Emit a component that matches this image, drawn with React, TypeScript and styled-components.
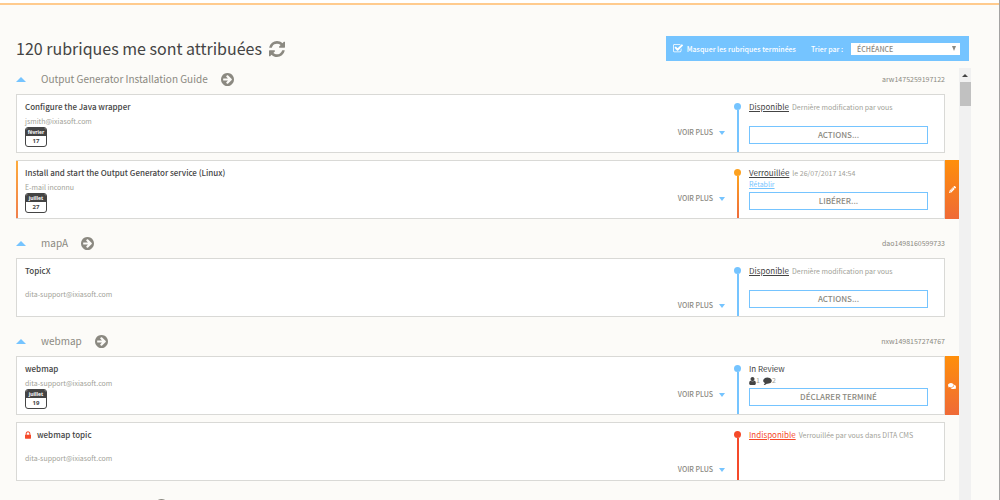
import React from "react";
import styled, { createGlobalStyle, css } from "styled-components";
import { FaComments, FaPencilAlt } from "react-icons/fa";

const colors = {
  page: "#fcfbf8",
  sky: "#75c4ff",
  text: "#444444",
  muted: "#8b8981",
  faint: "#a19f98",
  border: "#d9d9d6",
  red: "#f54a2a",
  amber: "#fda11f",
};

const Global = createGlobalStyle`
  * { box-sizing: border-box; }
  body {
    margin: 0;
    background: ${colors.page};
    color: ${colors.text};
    font-family: "Noto Sans CJK SC", "Noto Sans", sans-serif;
  }
  button, select, input { font-family: inherit; margin: 0; }
`;

/* ---------- icons ---------- */

const paths = {
  refresh:
    "M1639 1056q0 5-1 7-64 268-268 434.5t-478 166.5q-146 0-282.5-55t-243.5-157l-129 129q-19 19-45 19t-45-19-19-45v-448q0-26 19-45t45-19h448q26 0 45 19t19 45-19 45l-137 137q71 66 161 102t187 36q134 0 250-65t186-179q11-17 53-117 8-23 30-23h192q13 0 22.5 9.5t9.5 22.5zm25-800v448q0 26-19 45t-45 19h-448q-26 0-45-19t-19-45 19-45l138-138q-148-137-349-137-134 0-250 65t-186 179q-11 17-53 117-8 23-30 23h-199q-13 0-22.5-9.5t-9.5-22.5v-7q65-268 270-434.5t480-166.5q146 0 284 55.5t245 156.5l130-129q19-19 45-19t45 19 19 45z",
  arrow:
    "M1413 896q0-27-18-45l-91-91-362-362q-18-18-45-18t-45 18l-91 91q-18 18-18 45t18 45l189 189h-502q-26 0-45 19t-19 45v128q0 26 19 45t45 19h502l-189 189q-18 18-18 45t18 45l91 91q18 18 45 18t45-18l362-362 91-91q18-18 18-45zm251 0q0 209-103 385.5t-279.5 279.5-385.5 103-385.5-103-279.5-279.5-103-385.5 103-385.5 279.5-279.5 385.5-103 385.5 103 279.5 279.5 103 385.5z",
  check:
    "M1472 930v318q0 119-84.5 203.5t-203.5 84.5h-832q-119 0-203.5-84.5t-84.5-203.5v-832q0-119 84.5-203.5t203.5-84.5h832q63 0 117 25 15 7 18 23 3 17-9 29l-49 49q-10 10-23 10-3 0-9-2-23-6-45-6h-832q-66 0-113 47t-47 113v832q0 66 47 113t113 47h832q66 0 113-47t47-113v-254q0-13 9-22l64-64q10-10 23-10 6 0 12 3 20 8 20 29zm231-489l-814 814q-24 24-57 24t-57-24l-430-430q-24-24-24-57t24-57l110-110q24-24 57-24t57 24l263 263 647-647q24-24 57-24t57 24l110 110q24 24 24 57t-24 57z",
  lock: "M640 768h512v-192q0-106-75-181t-181-75-181 75-75 181v192zm832 96v576q0 40-28 68t-68 28h-960q-40 0-68-28t-28-68v-576q0-40 28-68t68-28h32v-192q0-184 132-316t316-132 316 132 132 316v192h32q40 0 68 28t28 68z",
  user: "M1536 1399q0 109-62.5 187t-150.5 78h-854q-88 0-150.5-78t-62.5-187q0-85 8.5-160.5t31.5-152 58.5-131 94-89 134.5-34.5q131 128 313 128t313-128q76 0 134.5 34.5t94 89 58.5 131 31.5 152 8.5 160.5zm-256-887q0 159-112.5 271.5t-271.5 112.5-271.5-112.5-112.5-271.5 112.5-271.5 271.5-112.5 271.5 112.5 112.5 271.5z",
  comment:
    "M1792 896q0 174-120 321.5t-326 233-450 85.5q-70 0-145-8-198 175-460 242-49 14-114 22-17 2-30.5-9t-17.5-29v-1q-3-4-.5-12t2-10 4.5-9.5l6-9 7-8.5 8-9q7-8 31-34.5t34.5-38 31-39.5 32.5-51 27-59 26-76q-157-89-247.5-220t-90.5-281q0-130 71-248.5t191-204.5 286-136.5 348-50.5q244 0 450 85.5t326 233 120 321.5z",
};

const boxes: Record<keyof typeof paths, string> = {
  refresh: "128 128 1536 1536",
  arrow: "128 128 1536 1536",
  check: "64 192 1664 1408",
  lock: "320 128 1152 1408",
  user: "256 128 1280 1536",
  comment: "0 128 1792 1664",
};

const Svg = styled.svg`
  display: block;
  flex: none;
  fill: currentColor;
`;

type IconProps = { name: keyof typeof paths; width: number; height: number };

const Icon = ({ name, width, height }: IconProps) => (
  <Svg width={width} height={height} viewBox={boxes[name]} aria-hidden="true">
    <path d={paths[name]} />
  </Svg>
);

const Triangle = styled.span<{ $up?: boolean }>`
  flex: none;
  border: solid transparent;
  ${(p) =>
    p.$up
      ? css`
          border-width: 0 5px 5px;
          border-bottom-color: ${colors.sky};
        `
      : css`
          border-width: 4px 3px 0;
          border-top-color: ${colors.sky};
        `}
`;

/* ---------- page frame ---------- */

const Page = styled.div`
  height: 100vh;
  overflow: hidden;
  display: flex;
  flex-direction: column;
  border-right: 1px solid #a3a3a3;
`;

const TopStrip = styled.div`
  flex: none;
  height: 5px;
  background: #ffffff;
  border-bottom: 2px solid #ffcb8e;
`;

const Header = styled.header`
  flex: none;
  display: flex;
  justify-content: space-between;
  align-items: center;
  padding: 31px 30px 7px 16px;
`;

const Heading = styled.h1`
  margin: 0;
  font-size: 16px;
  line-height: 25px;
  font-weight: 400;
`;

const HeadingGroup = styled.div`
  display: flex;
  align-items: center;
  gap: 7px;
`;

const IconButton = styled.button`
  display: block;
  padding: 0;
  border: 0;
  background: none;
  color: ${colors.muted};
`;

const Toolbar = styled.div`
  display: flex;
  align-items: center;
  height: 25px;
  padding: 0 9px 0 7px;
  gap: 15px;
  background: ${colors.sky};
  color: #ffffff;
  font-size: 7px;
  font-weight: 500;
`;

const ToolLabel = styled.label`
  display: flex;
  align-items: center;
  gap: 4px;
  white-space: nowrap;
`;

const CheckHolder = styled.span`
  display: grid;
  > * {
    grid-area: 1 / 1;
  }
`;

const Checkbox = styled.input`
  appearance: none;
  width: 10px;
  height: 9px;
`;

const SortLabel = styled(ToolLabel)`
  gap: 8px;
`;

const SelectHolder = styled.span`
  display: grid;
  align-items: center;
  width: 109px;
  height: 12px;
  background: #ffffff;
  color: ${colors.muted};
  > * {
    grid-area: 1 / 1;
  }
`;

const Select = styled.select`
  appearance: none;
  width: 100%;
  height: 12px;
  padding: 0 6px;
  border: 0;
  background: none;
  color: inherit;
  font-size: 7px;
  line-height: 12px;
  font-weight: 500;
`;

const SelectArrow = styled.span`
  justify-self: end;
  margin-right: 4px;
  border: solid transparent;
  border-width: 5px 2px 0;
  border-top-color: ${colors.muted};
  pointer-events: none;
`;

/* ---------- list ---------- */

const Body = styled.main`
  flex: 1;
  min-height: 0;
  display: flex;
  padding: 0 28px 0 16px;
`;

const List = styled.div`
  flex: 1;
  min-width: 0;
  overflow: hidden;
`;

const Group = styled.section`
  margin-bottom: 13px;
`;

const GroupHeader = styled.div`
  display: flex;
  align-items: center;
  height: 22px;
  margin: 0 14px 4px 0;
`;

const GroupName = styled.h2`
  margin: 0 13px 0 15px;
  font-size: 10px;
  line-height: 22px;
  font-weight: 400;
  color: ${colors.muted};
`;

const UnnamedGroup = styled.span`
  width: 129px;
`;

const GroupCode = styled.span`
  margin-left: auto;
  font-size: 7px;
  color: ${colors.muted};
`;

const Cards = styled.div`
  display: grid;
  gap: 7px;
`;

const CardRow = styled.div`
  display: flex;
`;

const Card = styled.article<{ $accent?: boolean }>`
  flex: 1;
  min-width: 0;
  display: flex;
  height: 59px;
  border: 1px solid ${colors.border};
  background: #ffffff;
  ${(p) =>
    p.$accent &&
    css`
      border-left: 0;
      padding-left: 1px;
      background: linear-gradient(#fdab3c, #f07f4c) left / 2px 100% no-repeat #ffffff;
    `}
`;

const SideTab = styled.button`
  flex: none;
  width: 14px;
  padding: 0;
  border: 0;
  display: grid;
  place-items: center;
  color: #ffffff;
  background: linear-gradient(#ff8f0a, #ef6a37);
`;

const TabSpace = styled.span`
  flex: none;
  width: 14px;
`;

const Summary = styled.div`
  flex: 1;
  min-width: 0;
  padding: 6px 0 0 8px;
`;

const Title = styled.h3`
  display: flex;
  align-items: center;
  gap: 6px;
  margin: 0;
  font-size: 8px;
  line-height: 12px;
  font-weight: 500;
  svg {
    color: ${colors.red};
  }
`;

const Email = styled.p<{ $low?: boolean }>`
  margin: ${(p) => (p.$low ? "12px" : "3px")} 0 0;
  font-size: 7px;
  line-height: 11px;
  color: ${colors.faint};
`;

const DateBox = styled.time`
  display: block;
  width: 22px;
  height: 20px;
  border: 1px solid ${colors.text};
  border-radius: 3px;
  overflow: hidden;
  text-align: center;
  font-family: "Noto Sans", sans-serif;
  font-size: 6px;
  font-weight: 700;
`;

const Month = styled.span`
  display: block;
  background: ${colors.text};
  color: #ffffff;
  font-size: 5px;
  line-height: 8px;
`;

const Day = styled.span`
  display: block;
  line-height: 10px;
`;

const More = styled.button<{ $low?: boolean }>`
  align-self: flex-start;
  display: flex;
  align-items: center;
  gap: 6px;
  margin: ${(p) => (p.$low ? "41px" : "32px")} 9px 0 0;
  padding: 0;
  border: 0;
  background: none;
  color: ${colors.muted};
  font-size: 7px;
  line-height: 11px;
  font-weight: 500;
`;

type Tone = "sky" | "amber" | "red";

const rails: Record<Tone, string> = {
  sky: colors.sky,
  amber: "linear-gradient(#fda11f, #ee6c3c)",
  red: colors.red,
};

const Rail = styled.div<{ $tone: Tone }>`
  width: 7px;
  padding-top: 8px;
  display: flex;
  flex-direction: column;
  &::before {
    content: "";
    height: 7px;
    border-radius: 50%;
    background: ${(p) => colors[p.$tone]};
  }
  &::after {
    content: "";
    flex: 1;
    width: 2px;
    margin-left: 3px;
    background: ${(p) => rails[p.$tone]};
  }
`;

const Status = styled.div`
  width: 203px;
  padding: 6px 16px 0 8px;
  display: grid;
  grid-template-rows: 12px 13px 18px;
`;

const StatusLine = styled.div`
  display: flex;
  align-items: baseline;
  gap: 3px;
  white-space: nowrap;
  font-size: 8px;
  line-height: 12px;
`;

const StatusLink = styled.a<{ $tone: Tone }>`
  color: ${(p) => (p.$tone === "red" ? colors.red : colors.text)};
`;

const Note = styled.span`
  font-size: 7px;
  color: ${colors.faint};
`;

const SubLine = styled.div`
  display: flex;
  align-items: center;
  height: 11px;
  font-size: 7px;
  line-height: 11px;
  color: ${colors.faint};
  a {
    color: ${colors.sky};
  }
`;

const Count = styled.span`
  display: flex;
  align-items: center;
  margin-right: 3px;
  svg {
    color: ${colors.text};
  }
`;

const ActionButton = styled.button`
  padding: 0;
  border: 1px solid ${colors.sky};
  background: #ffffff;
  color: ${colors.muted};
  font-size: 8px;
  line-height: 16px;
  font-weight: 500;
`;

/* ---------- scrollbar ---------- */

const ScrollTrack = styled.div`
  flex: none;
  width: 12px;
  background: #f1f1f1;
`;

const ScrollUp = styled.button`
  display: grid;
  place-items: center;
  width: 100%;
  height: 14px;
  padding: 0;
  border: 0;
  background: none;
  &::before {
    content: "";
    border: solid transparent;
    border-width: 0 3px 3px;
    border-bottom-color: #444444;
  }
`;

const ScrollThumb = styled.div`
  height: 24px;
  margin-left: 1px;
  background: #c1c1c1;
`;

/* ---------- data ---------- */

type Task = {
  title: string;
  locked?: boolean;
  email: string;
  date?: [string, string];
  tone: Tone;
  status: string;
  plain?: boolean;
  note?: string;
  restore?: boolean;
  counts?: [number, number];
  action?: string;
  tab?: "edit" | "comments";
};

const groups: { name: string; code: string; tasks: Task[] }[] = [
  {
    name: "Output Generator Installation Guide",
    code: "arw1475259197122",
    tasks: [
      {
        title: "Configure the Java wrapper",
        email: "jsmith@ixiasoft.com",
        date: ["février", "17"],
        tone: "sky",
        status: "Disponible",
        note: "Dernière modification par vous",
        action: "ACTIONS...",
      },
      {
        title: "Install and start the Output Generator service (Linux)",
        email: "E-mail inconnu",
        date: ["juillet", "27"],
        tone: "amber",
        status: "Verrouillée",
        note: "le 26/07/2017 14:54",
        restore: true,
        action: "LIBÉRER...",
        tab: "edit",
      },
    ],
  },
  {
    name: "mapA",
    code: "dao1498160599733",
    tasks: [
      {
        title: "TopicX",
        email: "dita-support@ixiasoft.com",
        tone: "sky",
        status: "Disponible",
        note: "Dernière modification par vous",
        action: "ACTIONS...",
      },
    ],
  },
  {
    name: "webmap",
    code: "nxw1498157274767",
    tasks: [
      {
        title: "webmap",
        email: "dita-support@ixiasoft.com",
        date: ["juillet", "19"],
        tone: "sky",
        status: "In Review",
        plain: true,
        counts: [1, 2],
        action: "DÉCLARER TERMINÉ",
        tab: "comments",
      },
      {
        title: "webmap topic",
        locked: true,
        email: "dita-support@ixiasoft.com",
        tone: "red",
        status: "Indisponible",
        note: "Verrouillée par vous dans DITA CMS",
      },
    ],
  },
  { name: "", code: "", tasks: [] },
];

const TaskRow = ({ task }: { task: Task }) => (
  <CardRow>
    <Card $accent={task.tone === "amber"}>
      <Summary>
        <Title>
          {task.locked && <Icon name="lock" width={6} height={8} />}
          {task.title}
        </Title>
        <Email $low={!task.date}>{task.email}</Email>
        {task.date && (
          <DateBox>
            <Month>{task.date[0]}</Month>
            <Day>{task.date[1]}</Day>
          </DateBox>
        )}
      </Summary>
      <More type="button" $low={!task.date}>
        VOIR PLUS
        <Triangle />
      </More>
      <Rail $tone={task.tone} />
      <Status>
        <StatusLine>
          {task.plain ? (
            <span>{task.status}</span>
          ) : (
            <StatusLink href="#" $tone={task.tone}>
              {task.status}
            </StatusLink>
          )}
          {task.note && <Note>{task.note}</Note>}
        </StatusLine>
        <SubLine>
          {task.restore && <a href="#">Rétablir</a>}
          {task.counts && (
            <>
              <Count>
                <Icon name="user" width={7} height={8} />
                {task.counts[0]}
              </Count>
              <Count>
                <Icon name="comment" width={9} height={8} />
                {task.counts[1]}
              </Count>
            </>
          )}
        </SubLine>
        {task.action && <ActionButton type="button">{task.action}</ActionButton>}
      </Status>
    </Card>
    {task.tab ? (
      <SideTab type="button" aria-label={task.tab === "edit" ? "Modifier" : "Commentaires"}>
        {task.tab === "edit" ? <FaPencilAlt size={7} /> : <FaComments size={8} />}
      </SideTab>
    ) : (
      <TabSpace />
    )}
  </CardRow>
);

export default function App() {
  return (
    <Page>
      <Global />
      <TopStrip />
      <Header>
        <HeadingGroup>
          <Heading>120 rubriques me sont attribuées</Heading>
          <IconButton type="button" aria-label="Actualiser">
            <Icon name="refresh" width={16} height={16} />
          </IconButton>
        </HeadingGroup>
        <Toolbar>
          <ToolLabel>
            <CheckHolder>
              <Checkbox type="checkbox" defaultChecked />
              <Icon name="check" width={10} height={9} />
            </CheckHolder>
            Masquer les rubriques terminées
          </ToolLabel>
          <SortLabel>
            Trier par :
            <SelectHolder>
              <Select defaultValue="due">
                <option value="due">ÉCHÉANCE</option>
              </Select>
              <SelectArrow />
            </SelectHolder>
          </SortLabel>
        </Toolbar>
      </Header>
      <Body>
        <List>
          {groups.map((group, i) => (
            <Group key={i}>
              <GroupHeader>
                <Triangle $up />
                {group.name ? <GroupName>{group.name}</GroupName> : <UnnamedGroup />}
                <IconButton type="button" aria-label="Ouvrir">
                  <Icon name="arrow" width={13} height={13} />
                </IconButton>
                <GroupCode>{group.code}</GroupCode>
              </GroupHeader>
              <Cards>
                {group.tasks.map((task) => (
                  <TaskRow key={task.title} task={task} />
                ))}
              </Cards>
            </Group>
          ))}
        </List>
        <ScrollTrack>
          <ScrollUp type="button" aria-label="Défiler vers le haut" />
          <ScrollThumb />
        </ScrollTrack>
      </Body>
    </Page>
  );
}
